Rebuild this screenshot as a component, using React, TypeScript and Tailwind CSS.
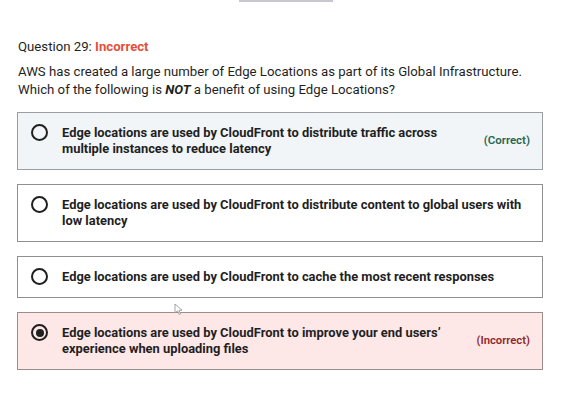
import React from "react";

type Opt = { text: string; state?: "correct" | "incorrect"; selected?: boolean };

const opts: Opt[] = [
  { text: "Edge locations are used by CloudFront to distribute traffic across multiple instances to reduce latency", state: "correct" },
  { text: "Edge locations are used by CloudFront to distribute content to global users with low latency" },
  { text: "Edge locations are used by CloudFront to cache the most recent responses" },
  { text: "Edge locations are used by CloudFront to improve your end users\u2019 experience when uploading files", state: "incorrect", selected: true },
];

function Radio({ selected }: { selected?: boolean }) {
  return (
    <div className="w-[17px] h-[17px] shrink-0 rounded-full border-[2px] border-[#1f1f1f] flex items-center justify-center mt-[-1px]">
      {selected && <div className="w-[8px] h-[8px] rounded-full bg-[#1f1f1f]" />}
    </div>
  );
}

export default function App() {
  return (
    <div className="relative w-[579px] h-[404px] bg-white overflow-hidden text-[#1f1f1f]" style={{ fontFamily: "Roboto, 'Liberation Sans', sans-serif" }}>
      <div className="flex justify-center">
        <div className="ml-[-8px] w-[94px] h-[2px] bg-[#c7c7cf]" />
      </div>
      <div className="pl-[18px] pt-[35px]">
        <div className="text-[13.2px] leading-[20px]">
          Question 29: <span className="font-bold text-[#e2503c]">Incorrect</span>
        </div>
        <div className="mt-[6px] text-[13.2px] leading-[18px] w-[545px]">
          AWS has created a large number of Edge Locations as part of its Global Infrastructure.
          <br />
          Which of the following is <b><i>NOT</i></b> a benefit of using Edge Locations?
        </div>
        <div className="mt-[13px] ml-[-1px] w-[526px] flex flex-col gap-[14px]">
          {opts.map((o, i) => {
            const bg = o.state === "correct" ? "bg-[#f1f5f7] border-[#9a9ea0]" : o.state === "incorrect" ? "bg-[#fde7e7] border-[#9c8c8c]" : "bg-white border-[#8f8f8f]";
            return (
              <div key={i} className={`border ${bg} flex items-center pl-[13px] pr-[12px] py-[12px]`}>
                <div className="flex items-start flex-1">
                  <Radio selected={o.selected} />
                  <div className={`ml-[14px] text-[12.9px] leading-[16px] font-bold ${o.state ? "w-[400px]" : "flex-1"}`}>{o.text}</div>
                </div>
                {o.state === "correct" && (
                  <div className="text-[11.5px] font-semibold text-[#276550] ml-auto">(Correct)</div>
                )}
                {o.state === "incorrect" && (
                  <div className="text-[11.3px] font-semibold text-[#8c2a2a] ml-auto">(Incorrect)</div>
                )}
              </div>
            );
          })}
        </div>
      </div>
      <svg className="absolute left-[174px] top-[303px]" width="9" height="12" viewBox="0 0 9 12">
        <path d="M1 1 L1 10 L3.5 7.8 L5.3 11.5 L6.6 10.9 L4.9 7.3 L8 7.2 Z" fill="#fff" stroke="#9a9a9a" strokeWidth="0.9" />
      </svg>
    </div>
  );
}
